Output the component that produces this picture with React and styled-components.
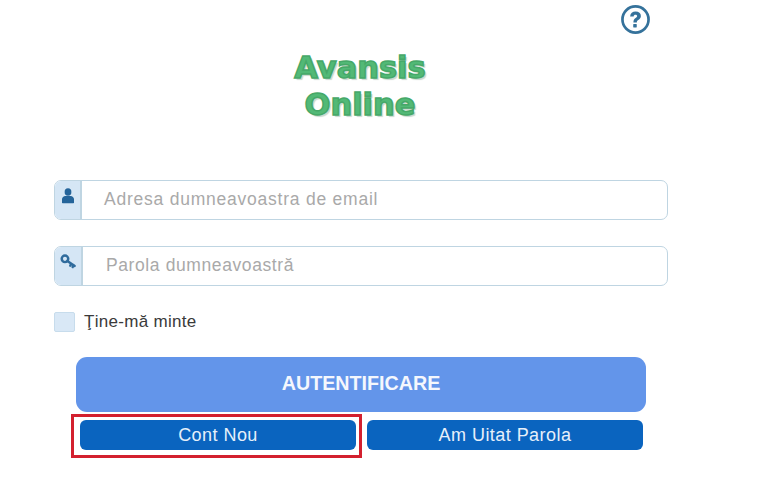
import React from "react";
import styled, { createGlobalStyle } from "styled-components";

const Global = createGlobalStyle`
  html, body { margin: 0; padding: 0; background: #fff; }
  * { box-sizing: border-box; }
  body { font-family: "Liberation Sans", Arial, sans-serif; }
`;

const Page = styled.main`
  width: 761px;
  height: 477px;
  padding: 5px 93px 0 54px;
  overflow: hidden;
`;

const HelpBar = styled.div`
  display: flex;
  justify-content: flex-end;
  padding-right: 18px;
  height: 28px;
`;

const Title = styled.h1`
  margin: 16px 0 0;
  padding-right: 2px;
  text-align: center;
  font-family: "DejaVu Sans", sans-serif;
  font-size: 30.5px;
  font-weight: 700;
  line-height: 37px;
  color: #52b976;
  -webkit-text-stroke: 1.5px #46a868;
  text-shadow: 2px 2px 1px #c9d8ce;
  letter-spacing: 0;
`;

const Fields = styled.div`
  display: flex;
  flex-direction: column;
  gap: 26px;
  margin-top: 57px;
`;

const Field = styled.div`
  display: flex;
  height: 40px;
  border: 1px solid #bfd5e2;
  border-radius: 7px;
  overflow: hidden;
`;

const Addon = styled.div`
  width: ${(p) => p.$width}px;
  flex: none;
  display: flex;
  justify-content: center;
  padding-top: ${(p) => p.$top}px;
  background: #d5e6f5;
  border-right: 2px solid #bfd5e2;
`;

const Placeholder = styled.div`
  padding-left: ${(p) => p.$indent}px;
  flex: 1;
  font-family: "Liberation Sans", Arial, sans-serif;
  font-size: 17.5px;
  line-height: 37px;
  letter-spacing: ${(p) => p.$tracking}px;
  color: #a9a9a9;
`;

const Remember = styled.label`
  display: flex;
  align-items: center;
  gap: 9px;
  margin-top: 26px;
  font-size: 17px;
  letter-spacing: 0.3px;
  color: #3a3a3a;
`;

const Check = styled.span`
  width: 21px;
  height: 20px;
  background: #d9e8f6;
  border: 1px solid #c7dcec;
  border-radius: 2px;
`;

const Actions = styled.div`
  width: 570px;
  margin: 25px 0 0 22px;
`;

const Login = styled.button`
  display: block;
  width: 570px;
  height: 55px;
  padding: 0 0 3px;
  border: 0;
  border-radius: 11px;
  background: #6395ea;
  color: #f4f7fd;
  font-family: "Liberation Sans", Arial, sans-serif;
  font-size: 19.7px;
  font-weight: 700;
  line-height: 52px;
`;

const Secondary = styled.div`
  display: flex;
  gap: 11px;
  margin-top: 8px;
  padding-left: 4px;
`;

const SmallButton = styled.button`
  position: relative;
  width: 276px;
  height: 30px;
  padding: 0;
  border: 0;
  border-radius: 6px;
  background: #0a64bf;
  color: #e6f0fa;
  font-family: "Liberation Sans", Arial, sans-serif;
  font-size: 18px;
  letter-spacing: 0.45px;
  line-height: 30px;
`;

const Highlight = styled.span`
  position: absolute;
  left: -9px;
  top: -6px;
  width: 291px;
  height: 44px;
  border: 3px solid #d3202f;
  pointer-events: none;
`;

const HelpIcon = () => (
  <svg width="29" height="29" viewBox="0 0 28 28" fill="none" aria-hidden="true">
    <circle cx="14" cy="14" r="12.6" stroke="#35729b" strokeWidth="2.6" />
    <path d="M8.8 11c.2-3 2.300-4.700 5.300-4.700 3.100 0 5.100 1.700 5.100 4.200 0 1.900-1 2.900-2.500 3.900-1.100.7-1.400 1.200-1.400 2.500h-3.300c0-2.200.6-3.300 2.100-4.300 1-.7 1.500-1.100 1.500-1.900 0-.9-.6-1.400-1.600-1.400-1.100 0-1.700.6-1.800 1.800z" fill="#35729b" />
    <rect x="11.800" y="18.400" width="3.400" height="3.300" rx=".4" fill="#35729b" />
  </svg>
);

const UserIcon = () => (
  <svg width="14" height="16" viewBox="0 0 14 17" aria-hidden="true">
    <ellipse cx="7" cy="4.200" rx="3.600" ry="4" fill="#24649a" />
    <path d="M.6 15.500V12c0-2.200 1.800-3.600 3.600-3.600h5.600c1.800 0 3.600 1.400 3.600 3.600v3.500c0 .4-.3.700-.7.700H1.300c-.4 0-.7-.3-.7-.7z" fill="#24649a" />
  </svg>
);

const KeyIcon = () => (
  <svg width="17" height="15" viewBox="0 0 19 17" fill="none" aria-hidden="true">
    <circle cx="5.500" cy="5.500" r="3.700" stroke="#2f6b9c" strokeWidth="2.800" />
    <path d="M8.200 8l8.300 5.500M12.500 10.800l-1 2.400M15 12.500l-.8 2.200" stroke="#2f6b9c" strokeWidth="2.800" strokeLinecap="round" />
  </svg>
);

export default function App() {
  return (
    <Page>
      <Global />
      <HelpBar>
        <HelpIcon />
      </HelpBar>
      <Title>
        Avansis
        <br />
        Online
      </Title>
      <Fields>
        <Field>
          <Addon $width={27} $top={7}>
            <UserIcon />
          </Addon>
          <Placeholder $indent={22} $tracking={0.77}>Adresa dumneavoastra de email</Placeholder>
        </Field>
        <Field>
          <Addon $width={28} $top={7}>
            <KeyIcon />
          </Addon>
          <Placeholder $indent={23} $tracking={0.6}>Parola dumneavoastră</Placeholder>
        </Field>
      </Fields>
      <Remember>
        <Check />
        Ţine-mă minte
      </Remember>
      <Actions>
        <Login>AUTENTIFICARE</Login>
        <Secondary>
          <SmallButton>
            Cont Nou
            <Highlight />
          </SmallButton>
          <SmallButton>Am Uitat Parola</SmallButton>
        </Secondary>
      </Actions>
    </Page>
  );
}
